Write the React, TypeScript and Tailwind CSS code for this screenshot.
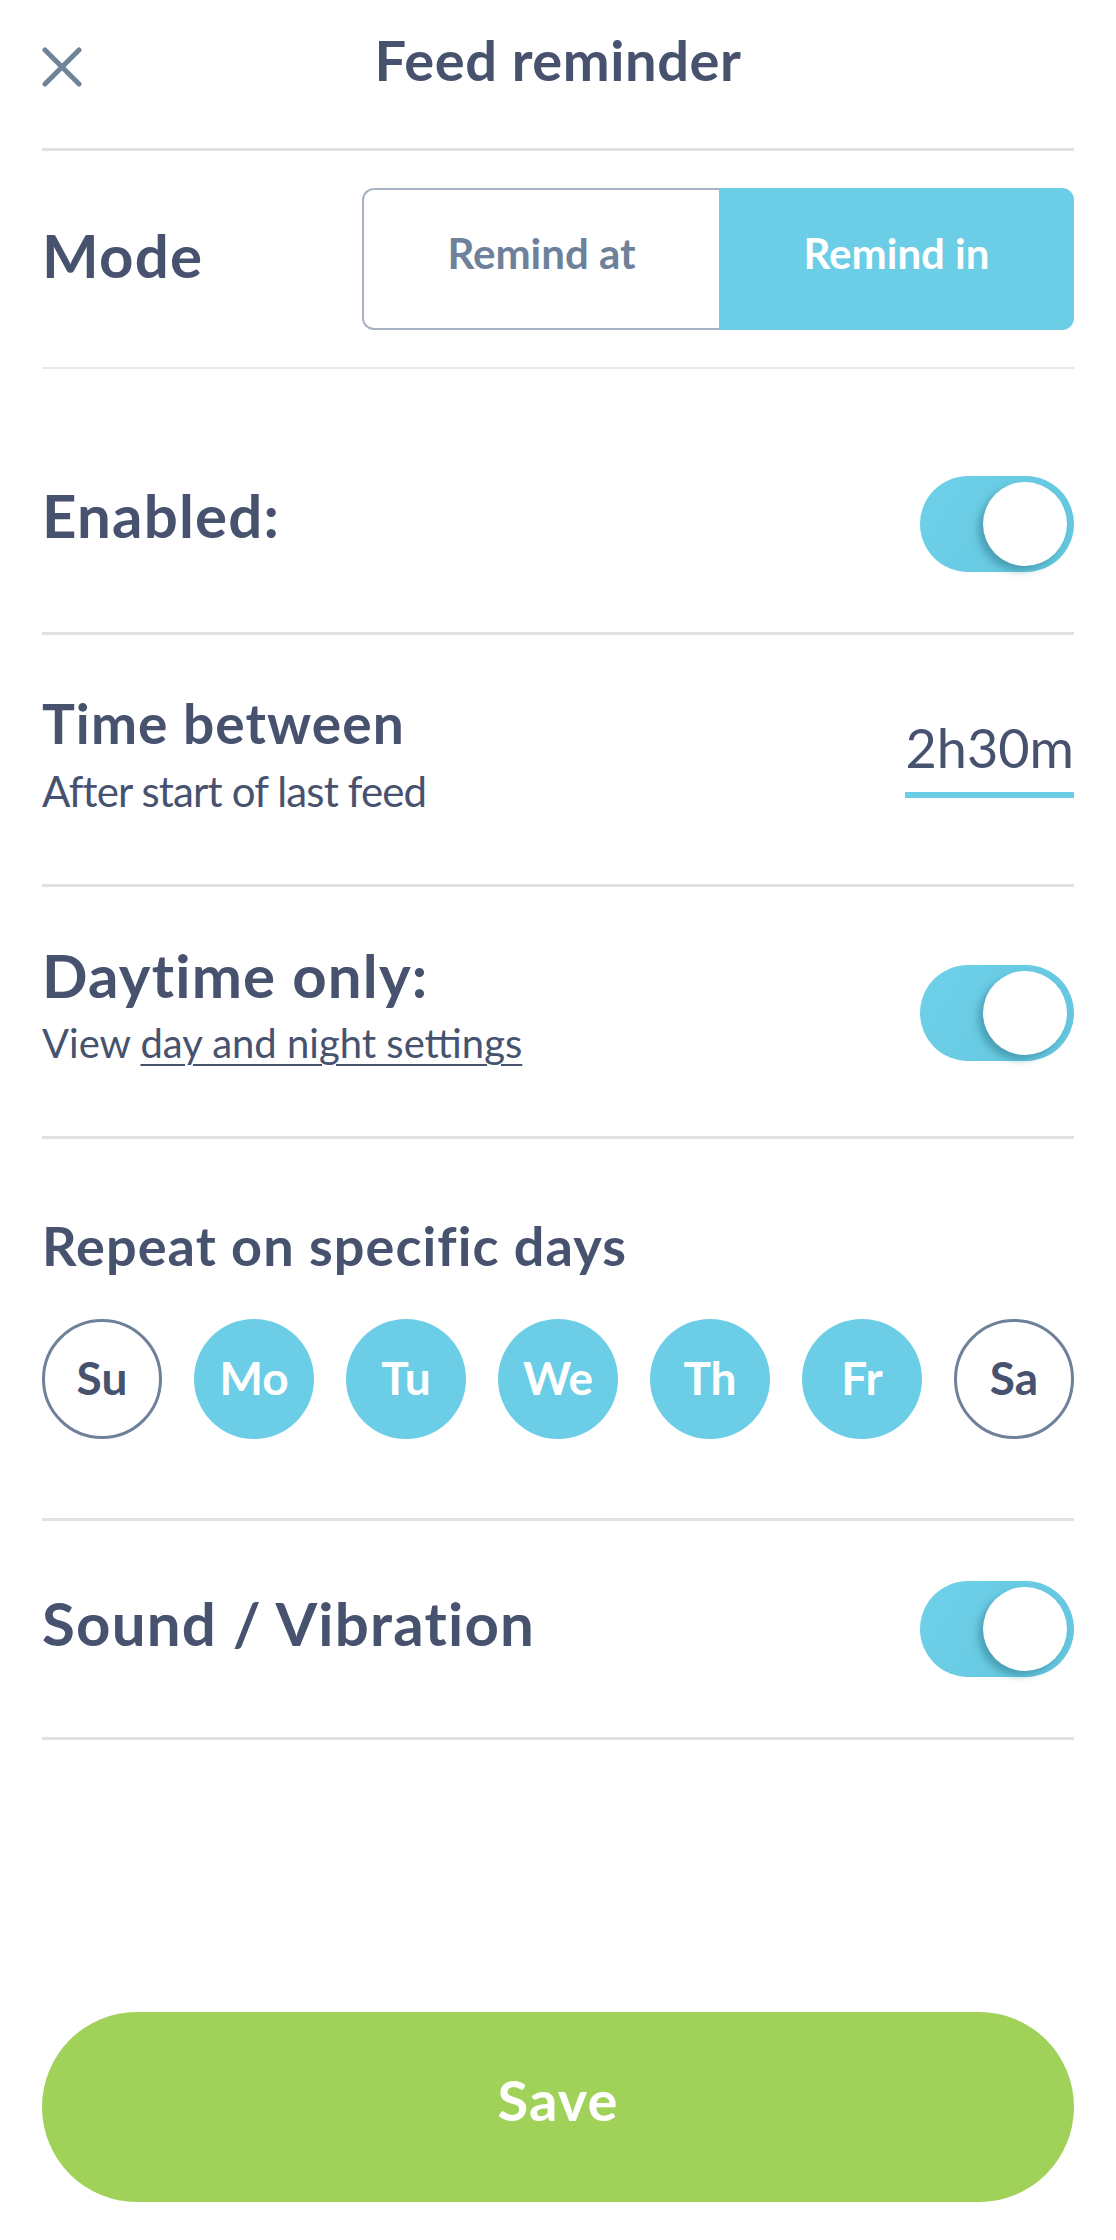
import { useState } from "react";

const days = [
  { label: "Su", on: false },
  { label: "Mo", on: true },
  { label: "Tu", on: true },
  { label: "We", on: true },
  { label: "Th", on: true },
  { label: "Fr", on: true },
  { label: "Sa", on: false },
];

function Toggle() {
  return (
    <div className="flex h-[96px] w-[154px] shrink-0 items-center justify-end rounded-full bg-[linear-gradient(120deg,#6fd1e9,#64c6de)] pr-[7px]">
      <div className="h-[84px] w-[84px] rounded-full bg-white shadow-[-5px_5px_7px_rgba(45,120,140,0.5)]" />
    </div>
  );
}

function Divider({ thin }: { thin?: boolean }) {
  return <div className={thin ? "h-[2px] bg-[#e9e9e9]" : "h-[3px] bg-[#e1e1e1]"} />;
}

export default function App() {
  const [mode, setMode] = useState<"at" | "in">("in");

  return (
    <div className="flex h-[2240px] w-full flex-col bg-white px-[42px] font-['Lato','Noto_Sans',sans-serif] text-[#47526f]">
      {/* Header */}
      <header className="grid h-[148px] grid-cols-[1fr_auto_1fr] items-start pt-[32px]">
        <button className="mt-[15px] h-[40px] w-[40px]" aria-label="Close">
          <svg viewBox="0 0 40 40" className="h-[40px] w-[40px]" fill="none" stroke="#6f8399" strokeWidth="5" strokeLinecap="round">
            <path d="M3 3 L37 37 M37 3 L3 37" />
          </svg>
        </button>
        <h1 className="text-[56px] font-bold leading-none tracking-[0.01em]">Feed reminder</h1>
        <div />
      </header>
      <Divider />

      {/* Mode */}
      <section className="flex items-center justify-between py-[37px]">
        <span className="pb-[8px] text-[60px] font-bold leading-none tracking-[0.02em]">Mode</span>
        <div className="flex h-[142px] w-[712px]">
          <button
            onClick={() => setMode("at")}
            className={
              mode === "at"
                ? "flex-1 rounded-l-[12px] bg-[#6bcee6] pb-[12px] text-[42px] font-bold text-white"
                : "flex-1 rounded-l-[12px] border-2 border-r-0 border-[#a9b3c3] pb-[12px] text-[42px] font-bold text-[#6e819a]"
            }
          >
            Remind at
          </button>
          <button
            onClick={() => setMode("in")}
            className={
              mode === "in"
                ? "flex-1 rounded-r-[12px] bg-[#6bcee6] pb-[12px] text-[42px] font-bold text-white"
                : "flex-1 rounded-r-[12px] border-2 border-l-0 border-[#a9b3c3] pb-[12px] text-[42px] font-bold text-[#6e819a]"
            }
          >
            Remind in
          </button>
        </div>
      </section>
      <Divider thin />

      {/* Enabled */}
      <section className="flex items-center justify-between pb-[60px] pt-[107px]">
        <span className="pb-[18px] text-[60px] font-bold leading-none tracking-[0.02em]">Enabled:</span>
        <Toggle />
      </section>
      <Divider />

      {/* Time between */}
      <section className="flex items-start justify-between pb-[72px] pt-[61px]">
        <div className="flex flex-col">
          <span className="text-[55px] font-bold leading-none tracking-[0.02em]">Time between</span>
          <span className="mt-[19px] text-[42px] leading-none tracking-[-0.02em]">After start of last feed</span>
        </div>
        <div className="mt-[25px] flex flex-col items-stretch">
          <span className="text-right text-[54px] leading-none">2h30m</span>
          <div className="mt-[17px] h-[6px] bg-[#6bcee6]" />
        </div>
      </section>
      <Divider />

      {/* Daytime only */}
      <section className="flex items-start justify-between pb-[73px] pt-[58px]">
        <div className="flex flex-col">
          <span className="text-[60px] font-bold leading-none tracking-[0.02em]">Daytime only:</span>
          <span className="mt-[18px] text-[40px] leading-none">
            View <a className="underline decoration-2 underline-offset-[6px]">day and night settings</a>
          </span>
        </div>
        <div className="mt-[20px]">
          <Toggle />
        </div>
      </section>
      <Divider />

      {/* Repeat days */}
      <section className="flex flex-col pb-[79px] pt-[80px]">
        <span className="text-[54px] font-bold leading-none tracking-[0.02em]">Repeat on specific days</span>
        <div className="mt-[46px] flex justify-between">
          {days.map((d) => (
            <div
              key={d.label}
              className={
                d.on
                  ? "flex h-[120px] w-[120px] items-center justify-center rounded-full bg-[#6bcee6] pb-[4px] text-[46px] font-bold text-white"
                  : "flex h-[120px] w-[120px] items-center justify-center rounded-full border-[3px] border-[#6e819a] pb-[4px] text-[46px] font-bold text-[#47526f]"
              }
            >
              {d.label}
            </div>
          ))}
        </div>
      </section>
      <Divider />

      {/* Sound */}
      <section className="flex items-center justify-between py-[60px]">
        <span className="pb-[12px] text-[60px] font-bold leading-none tracking-[0.02em]">Sound / Vibration</span>
        <Toggle />
      </section>
      <Divider />

      <button className="mb-[38px] mt-auto h-[190px] w-full rounded-full bg-[#a0d158] pb-[14px] text-[56px] font-bold tracking-[0.02em] text-white">
        Save
      </button>
    </div>
  );
}
